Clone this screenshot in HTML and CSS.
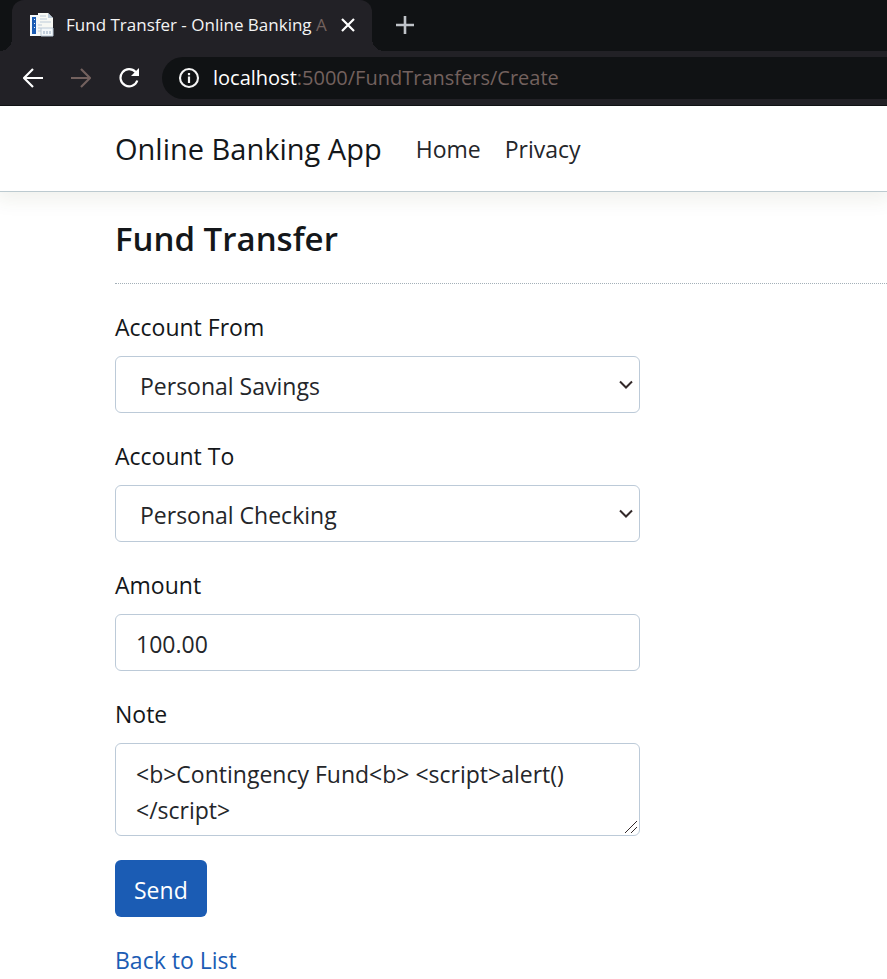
FILE: index.html
```html
<!DOCTYPE html>
<html lang="en">
<head>
<meta charset="utf-8">
<title>Fund Transfer - Online Banking App</title>
<link rel="stylesheet" href="styles.css">
</head>
<body>
<div class="browser">
  <div class="tab-strip">
    <div class="tab">
      <svg class="favicon" width="24" height="24" viewBox="0 0 24 24" aria-hidden="true">
        <path d="M0 2h9v21H0z" fill="#f4f8fa"/>
        <path d="M2 4h4v17H2z" fill="#1b5cb4"/>
        <path d="M4 6h1v1H4zm0 4h1v1H4zm0 4h1v1H4z" fill="#f4f8fa"/>
        <path d="M8 0h10l5 5v18H8z" fill="#f7f8f4"/>
        <path d="M18 0v5h5z" fill="#bccad8"/>
        <path d="M10 3h6M10 6h7M10 9h11M8 12h4M8 15h3M8 18h3" stroke="#bccad8" stroke-width="1"/>
        <path d="M11 15h12v8H11z" fill="#f4f8fa" stroke="#bccad8" stroke-width="1"/>
        <path d="M14 18v3M17 18v3M20 18v3" stroke="#8fa4bc"/>
      </svg>
      <span class="tab-title">Fund Transfer - Online Banking <span class="faded">A</span></span>
      <button class="icon-button" type="button" aria-label="Close tab">
        <svg width="14" height="14" viewBox="0 0 14 14"><path d="M1 1l12 12M13 1L1 13" stroke="#fff" stroke-width="2.2"/></svg>
      </button>
    </div>
    <button class="icon-button new-tab" type="button" aria-label="New tab">
      <svg width="18" height="18" viewBox="0 0 18 18"><path d="M9 0v18M0 9h18" stroke="#bfc3c8" stroke-width="2.6"/></svg>
    </button>
  </div>
  <div class="toolbar">
    <button class="icon-button" type="button" aria-label="Back">
      <svg width="20" height="20" viewBox="0 0 20 20"><path d="M20 10H1.5M10 1L1 10l9 9" fill="none" stroke="#fff" stroke-width="2.2"/></svg>
    </button>
    <button class="icon-button" type="button" aria-label="Forward">
      <svg width="20" height="20" viewBox="0 0 20 20"><path d="M0 10h18.5M10 1l9 9-9 9" fill="none" stroke="#73615e" stroke-width="2.2"/></svg>
    </button>
    <button class="icon-button" type="button" aria-label="Reload">
      <svg width="21" height="20" viewBox="0 0 21 20"><path d="M16.6 4.1A8.6 8.6 0 1 0 18.3 12.5" fill="none" stroke="#fff" stroke-width="2.2"/><path d="M20 0v8h-8z" fill="#fff"/></svg>
    </button>
    <div class="address">
      <svg width="22" height="22" viewBox="0 0 22 22" aria-hidden="true"><circle cx="11" cy="11" r="9" fill="none" stroke="#f4f4f4" stroke-width="2.1"/><path d="M11 9.5V16M11 6v2.2" stroke="#f4f4f4" stroke-width="2.2"/></svg>
      <span class="url"><span class="host">localhost</span>:5000/FundTransfers/Create</span>
    </div>
  </div>
</div>

<header class="site-header">
  <nav class="nav">
    <a class="brand" href="#">Online Banking App</a>
    <a class="nav-link" href="#">Home</a>
    <a class="nav-link" href="#">Privacy</a>
  </nav>
</header>

<main class="content">
  <h1>Fund Transfer</h1>
  <hr>
  <form class="transfer-form">
    <div class="field">
      <label for="from">Account From</label>
      <div class="control-wrap">
        <select class="control" id="from"><option>Personal Savings</option></select>
        <svg class="chevron" width="14" height="10" viewBox="0 0 14 10" aria-hidden="true"><path d="M1 1.5l6 6 6-6" fill="none" stroke="#33292a" stroke-width="2"/></svg>
      </div>
    </div>
    <div class="field">
      <label for="to">Account To</label>
      <div class="control-wrap">
        <select class="control" id="to"><option>Personal Checking</option></select>
        <svg class="chevron" width="14" height="10" viewBox="0 0 14 10" aria-hidden="true"><path d="M1 1.5l6 6 6-6" fill="none" stroke="#33292a" stroke-width="2"/></svg>
      </div>
    </div>
    <div class="field">
      <label for="amount">Amount</label>
      <input class="control" id="amount" type="text" value="100.00">
    </div>
    <div class="field">
      <label for="note">Note</label>
      <div class="control-wrap">
        <textarea class="control" id="note" rows="2" spellcheck="false">&lt;b&gt;Contingency Fund&lt;b&gt; &lt;script&gt;alert()
&lt;/script&gt;</textarea>
        <svg class="grip" width="12" height="12" viewBox="0 0 12 12" aria-hidden="true"><path d="M0 12L12 0M6 12l6-6" stroke="#33292a" stroke-width="1"/></svg>
      </div>
    </div>
    <button class="send" type="submit">Send</button>
  </form>
  <a class="back" href="#">Back to List</a>
</main>
</body>
</html>
```

FILE: styles.css
```css
* { box-sizing: border-box; }

body {
  margin: 0;
  background: #fff;
  color: #14171a;
  font-family: "Open Sans", "Noto Sans", sans-serif;
  font-size: 23px;
  line-height: 36px;
}

a { text-decoration: none; }

.browser {
  background: #222126;
  border-bottom: 1px solid #101214;
}

.tab-strip {
  display: flex;
  align-items: center;
  height: 51px;
  padding-left: 12px;
  background: #101214;
}

.tab {
  position: relative;
  display: flex;
  align-items: center;
  width: 360px;
  height: 51px;
  padding: 0 17px 2px 18px;
  border-radius: 12px 12px 0 0;
  background: #222126;
}

.tab::before,
.tab::after {
  content: "";
  position: absolute;
  bottom: 0;
  width: 12px;
  height: 12px;
}

.tab::before {
  right: 100%;
  background: radial-gradient(circle at 0 0, #101214 12px, #222126 12px);
}

.tab::after {
  left: 100%;
  background: radial-gradient(circle at 100% 0, #101214 12px, #222126 12px);
}

.favicon { flex: none; }

.tab-title {
  flex: 1;
  margin-left: 12px;
  color: #f4f4f4;
  font-size: 17px;
  white-space: nowrap;
}

.faded { color: #73615e; }

.icon-button {
  display: flex;
  flex: none;
  padding: 0;
  border: 0;
  background: none;
}

.new-tab {
  margin-left: 24px;
  padding-bottom: 2px;
}

.toolbar {
  display: flex;
  align-items: center;
  gap: 28px;
  height: 54px;
  padding-left: 23px;
}

.address {
  display: flex;
  flex: 1;
  align-items: center;
  gap: 13px;
  height: 42px;
  margin-left: -6px;
  padding-left: 16px;
  border-radius: 21px 0 0 21px;
  background: #101214;
}

.url {
  color: #73615e;
  font-size: 20px;
  white-space: nowrap;
}

.host { color: #fff; }

.site-header {
  border-bottom: 1px solid #bccad0;
  box-shadow: 0 4px 18px 4px rgba(60, 80, 20, 0.08);
  clip-path: inset(0 0 -30px);
}

.nav {
  display: flex;
  align-items: center;
  gap: 24px;
  height: 85px;
  padding-left: 115px;
}

.brand {
  margin-right: 10px;
  color: #14171a;
  font-size: 29px;
}

.nav-link { color: #24262a; }

.content { padding: 25px 0 0 115px; }

h1 {
  margin: 0;
  font-size: 33px;
  font-weight: 600;
  line-height: 44px;
}

hr {
  margin: 22px 0 25px;
  border: 0;
  border-top: 1px dotted #a4b0b8;
}

.transfer-form {
  width: 100%;
  max-width: 525px;
}

.field + .field { margin-top: 25px; }

label {
  display: block;
  margin-bottom: 11px;
}

.control {
  display: block;
  width: 100%;
  height: 57px;
  padding: 2px 20px 0;
  border: 1px solid #bccad8;
  border-radius: 6px;
  outline: 0;
  background: #fff;
  color: #24262a;
  font: inherit;
}

.control-wrap { position: relative; }

select.control {
  padding: 2px 24px 0;
  appearance: none;
}

.chevron {
  position: absolute;
  top: 24px;
  right: 7px;
  pointer-events: none;
}

textarea.control {
  height: 93px;
  padding: 12px 20px 7px;
  overflow: hidden;
  resize: none;
}

.grip {
  position: absolute;
  right: 3px;
  bottom: 3px;
}

.send {
  display: block;
  height: 57px;
  margin-top: 24px;
  padding: 2px 19px 0;
  border: 0;
  border-radius: 6px;
  background: #1b5cb4;
  color: #fff;
  font: inherit;
}

.back {
  display: inline-block;
  margin-top: 25px;
  color: #1b5cb4;
}
```
